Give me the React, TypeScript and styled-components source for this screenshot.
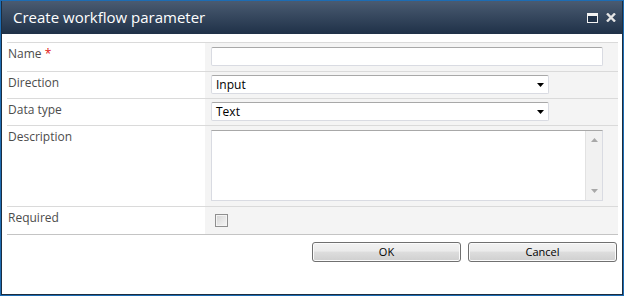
import React from 'react';
import styled, { createGlobalStyle } from 'styled-components';

const GlobalStyle = createGlobalStyle`
  body {
    margin: 0;
    background: #ffffff;
    font-family: "Open Sans", "DejaVu Sans", sans-serif;
  }
`;

const Dialog = styled.div`
  width: 624px;
  height: 296px;
  box-sizing: border-box;
  border: 1px solid #1d6cb3;
  background: #ffffff;
  display: flex;
  flex-direction: column;
`;

const Frame = styled.div`
  flex: 1;
  display: flex;
  flex-direction: column;
  border: 1px solid #1c2d40;
  border-top: none;
`;

const TitleBar = styled.div`
  height: 33px;
  display: flex;
  align-items: center;
  justify-content: space-between;
  padding: 0 6px 0 11px;
  background: linear-gradient(#4a5b71, #1f3148);
`;

const Title = styled.div`
  color: #ffffff;
  font-size: 15px;
  line-height: 20px;
  margin-top: -2px;
`;

const TitleButtons = styled.div`
  display: flex;
  align-items: center;
  gap: 8px;
`;

const Content = styled.div`
  padding: 8px 4px 0 5px;
`;

const FormTable = styled.div`
  border-top: 1px solid #dadada;
`;

const Row = styled.div<{ $last?: boolean }>`
  display: grid;
  grid-template-columns: 198px 1fr;
  border-bottom: 1px solid ${(p) => (p.$last ? '#c4c4c4' : '#dadada')};
`;

const Label = styled.div`
  padding: 3px 0 0 1px;
  color: #4c4c4c;
  font-size: 12px;
  line-height: 16px;
`;

const Star = styled.span`
  color: #e01010;
`;

const Control = styled.div<{ $pad: string }>`
  background: #f4f4f4;
  padding: ${(p) => p.$pad};
`;

const TextBox = styled.div`
  width: 392px;
  height: 19px;
  box-sizing: border-box;
  background: #ffffff;
  border: 1px solid #d9dbe2;
  border-top-color: #a8a8a8;
  border-radius: 2px;
`;

const SelectBox = styled.div`
  width: 338px;
  height: 19px;
  box-sizing: border-box;
  background: #ffffff;
  border: 1px solid #d9dbe2;
  border-top-color: #a8a8a8;
  border-radius: 2px;
  display: flex;
  align-items: center;
  justify-content: space-between;
  padding: 0 4px 0 4px;
  color: #000000;
  font-size: 12px;
`;

const TextArea = styled.div`
  width: 392px;
  height: 71px;
  box-sizing: border-box;
  background: #ffffff;
  border: 1px solid #d9dbe2;
  border-top-color: #a8a8a8;
  display: flex;
  justify-content: flex-end;
`;

const ScrollBar = styled.div`
  width: 16px;
  background: #f1f1f1;
  border-left: 1px solid #e2e2e2;
  display: flex;
  flex-direction: column;
  justify-content: space-between;
  align-items: center;
  padding: 7px 0 7px;
`;

const CheckBox = styled.div`
  width: 13px;
  height: 13px;
  box-sizing: border-box;
  border: 1px solid #8f8f8f;
  background: linear-gradient(135deg, #d4d4d4, #f7f7f7);
  box-shadow: inset 0 0 0 1px #f4f4f4;
`;

const ButtonRow = styled.div`
  display: flex;
  justify-content: flex-end;
  gap: 7px;
  padding: 7px 1px 0 0;
`;

const Button = styled.button`
  width: 149px;
  height: 20px;
  box-sizing: border-box;
  border: 1px solid #707070;
  border-radius: 3px;
  background: linear-gradient(#f2f2f2 0%, #ebebeb 45%, #dddddd 50%, #cfcfcf 100%);
  box-shadow: inset 0 0 0 1px #fbfbfb;
  font-family: "Open Sans", "DejaVu Sans", sans-serif;
  font-size: 11px;
  line-height: 16px;
  color: #000000;
  padding: 0;
`;

const Arrow = ({ up, color }: { up?: boolean; color: string }) => (
  <svg width="7" height="4" viewBox="0 0 7 4">
    <path d={up ? 'M0 4 L3.5 0 L7 4 Z' : 'M0 0 L7 0 L3.5 4 Z'} fill={color} />
  </svg>
);

const MaximizeIcon = () => (
  <svg width="11" height="10" viewBox="0 0 11 10">
    <rect x="0.5" y="0.5" width="10" height="9" fill="#1f3148" stroke="#f2f2f2" />
    <rect x="0" y="0" width="11" height="3" fill="#f2f2f2" />
  </svg>
);

const CloseIcon = () => (
  <svg width="10" height="9" viewBox="0 0 10 9">
    <path d="M1 0.5 L9 8.5 M9 0.5 L1 8.5" stroke="#e6e6e6" strokeWidth="2.4" />
  </svg>
);

const App: React.FC = () => {
  return (
    <>
      <GlobalStyle />
      <Dialog>
        <Frame>
          <TitleBar>
            <Title>Create workflow parameter</Title>
            <TitleButtons>
              <MaximizeIcon />
              <CloseIcon />
            </TitleButtons>
          </TitleBar>
          <Content>
            <FormTable>
              <Row>
                <Label>
                  Name <Star>*</Star>
                </Label>
                <Control $pad="4px 0 5px 6px">
                  <TextBox />
                </Control>
              </Row>
              <Row>
                <Label>Direction</Label>
                <Control $pad="3px 0 4px 6px">
                  <SelectBox>
                    <span>Input</span>
                    <Arrow color="#000000" />
                  </SelectBox>
                </Control>
              </Row>
              <Row>
                <Label>Data type</Label>
                <Control $pad="3px 0 4px 6px">
                  <SelectBox>
                    <span>Text</span>
                    <Arrow color="#000000" />
                  </SelectBox>
                </Control>
              </Row>
              <Row>
                <Label>Description</Label>
                <Control $pad="4px 0 5px 6px">
                  <TextArea>
                    <ScrollBar>
                      <Arrow up color="#a8a8a8" />
                      <Arrow color="#a8a8a8" />
                    </ScrollBar>
                  </TextArea>
                </Control>
              </Row>
              <Row $last>
                <Label>Required</Label>
                <Control $pad="7px 0 7px 10px">
                  <CheckBox />
                </Control>
              </Row>
            </FormTable>
            <ButtonRow>
              <Button>OK</Button>
              <Button>Cancel</Button>
            </ButtonRow>
          </Content>
        </Frame>
      </Dialog>
    </>
  );
};

export default App;
